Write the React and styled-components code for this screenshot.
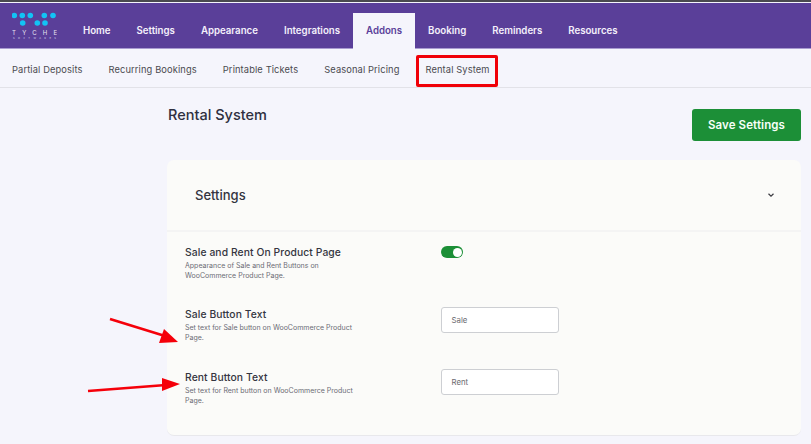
import React from 'react';
import styled, { createGlobalStyle } from 'styled-components';

const GlobalStyle = createGlobalStyle`
    html, body {
        margin: 0;
        padding: 0;
        background: #f5f5fc;
        font-family: Inter, "Liberation Sans", sans-serif;
    }
`;

const Page = styled.div`
    position: relative;
    width: 811px;
    height: 444px;
    overflow: hidden;
    background: #f5f5fc;
    border-top: 2px solid #4a4a4f;
    box-sizing: border-box;
`;

const TopBar = styled.div`
    height: 46px;
    margin-top: 1px;
    background: #5a3f99;
    border-bottom: 1px solid #a99bd0;
    box-sizing: border-box;
    display: flex;
    align-items: flex-end;
    padding-left: 12px;
`;

const LogoBox = styled.div`
    width: 45px;
    height: 31px;
    margin-bottom: 6px;
    margin-right: 13px;
    flex-shrink: 0;
`;

const NavItem = styled.div`
    height: ${(p) => (p.$active ? '36px' : '35px')};
    margin-bottom: ${(p) => (p.$active ? '-1px' : '0')};
    padding: 0 13px;
    display: flex;
    align-items: center;
    padding-bottom: ${(p) => (p.$active ? '1px' : '0')};
    box-sizing: border-box;
    font-size: 9.68px;
    font-weight: 600;
    color: ${(p) => (p.$active ? '#5a3f99' : '#f4f0fb')};
    background: ${(p) => (p.$active ? '#f5f5fc' : 'transparent')};
`;

const SubBar = styled.div`
    height: 39px;
    border-bottom: 1px solid #e2e2e8;
    box-sizing: border-box;
    display: flex;
    align-items: center;
    padding: 2px 0 0 12px;
    gap: 26px;
`;

const SubItem = styled.div`
    position: relative;
    font-size: 9.3px;
    letter-spacing: 0.12px;
    color: #4b4b50;
`;

const RedFrame = styled.div`
    position: absolute;
    left: -9px;
    right: -8px;
    top: -9px;
    bottom: -12px;
    border: 3px solid #f00008;
    border-radius: 2px;
`;

const Content = styled.div`
    width: 634px;
    margin-left: 167px;
`;

const TitleRow = styled.div`
    display: flex;
    justify-content: space-between;
    align-items: flex-start;
    padding-top: 21px;
`;

const Title = styled.div`
    font-size: 14.5px;
    font-weight: 500;
    line-height: 17px;
    color: #2f3040;
    margin: -3px 0 0 1px;
`;

const SaveButton = styled.div`
    width: 109px;
    height: 32px;
    background: #1c8f37;
    border-radius: 3px;
    color: #f6fff8;
    font-size: 11.5px;
    font-weight: 600;
    letter-spacing: 0.1px;
    display: flex;
    align-items: center;
    justify-content: center;
`;

const Card = styled.div`
    margin-top: 19px;
    height: 276px;
    background: #fbfbf9;
    border-radius: 7px;
    border-bottom: 1px solid #e8e8ec;
    box-sizing: border-box;
`;

const CardHeader = styled.div`
    height: 72px;
    border-bottom: 2px solid #f4f4f4;
    box-sizing: border-box;
    display: flex;
    align-items: center;
    justify-content: space-between;
    padding: 0 26px 0 28px;
`;

const CardTitle = styled.div`
    font-size: 13px;
    font-weight: 500;
    color: #33343f;
`;

const Row = styled.div`
    display: flex;
    height: ${(p) => p.$height}px;
    padding-left: 18px;
    padding-top: ${(p) => p.$top || 0}px;
`;

const RowText = styled.div`
    width: 256px;
`;

const RowTitle = styled.div`
    font-size: 10.3px;
    font-weight: 500;
    line-height: 13px;
    letter-spacing: 0.1px;
    color: #34353f;
`;

const RowHelp = styled.div`
    font-size: 7px;
    line-height: 10.5px;
    margin-top: 1.5px;
    color: #6b6c75;
    width: 185px;
`;

const Control = styled.div`
    margin-top: ${(p) => p.$top}px;
`;

const TextField = styled.div`
    width: 117.5px;
    height: 26px;
    box-sizing: border-box;
    background: #fff;
    border: 1px solid #cdcfd3;
    border-radius: 3px;
    display: flex;
    align-items: center;
    padding-left: 9.5px;
    font-size: 7.8px;
    color: #6a6a70;
`;

const Toggle = styled.div`
    width: 22px;
    height: 12px;
    border-radius: 6px;
    background: #1c8f37;
    display: flex;
    align-items: center;
    justify-content: flex-end;
    padding-right: 1px;
    box-sizing: border-box;
`;

const Knob = styled.div`
    width: 9px;
    height: 9px;
    border-radius: 50%;
    background: #fff;
`;

const ArrowLayer = styled.svg`
    position: absolute;
    left: 0;
    top: -2px;
    width: 811px;
    height: 444px;
    pointer-events: none;
`;

const navItems = ['Home', 'Settings', 'Appearance', 'Integrations', 'Addons', 'Booking', 'Reminders', 'Resources'];
const subItems = ['Partial Deposits', 'Recurring Bookings', 'Printable Tickets', 'Seasonal Pricing', 'Rental System'];

const dots = [
    [14.3, 16.5], [22.3, 16.5], [30.3, 16.5], [44.3, 16.5], [53, 16.5],
    [22.7, 24], [37.3, 24], [45, 24],
];

function Logo() {
    return (
        <LogoBox>
            <svg width="45" height="31" viewBox="12 12 45 31">
                {dots.map(([x, y]) => (
                    <circle key={`${x}-${y}`} cx={x} cy={y} r="2.8" fill="#12c3f5" />
                ))}
                <text x="12" y="36" fontSize="6" fill="#e8e4f2" textLength="45" fontFamily="Inter, sans-serif">
                    TYCHE
                </text>
                <text x="13" y="40" fontSize="2.6" fill="#d9d3ea" textLength="43" fontFamily="Inter, sans-serif">
                    SOFTWARES
                </text>
            </svg>
        </LogoBox>
    );
}

function App() {
    return (
        <Page>
            <GlobalStyle />
            <TopBar>
                <Logo />
                {navItems.map((item) => (
                    <NavItem key={item} $active={item === 'Addons'}>{item}</NavItem>
                ))}
            </TopBar>
            <SubBar>
                {subItems.map((item) => (
                    <SubItem key={item}>
                        {item}
                        {item === 'Rental System' && <RedFrame />}
                    </SubItem>
                ))}
            </SubBar>
            <Content>
                <TitleRow>
                    <Title>Rental System</Title>
                    <SaveButton>Save Settings</SaveButton>
                </TitleRow>
                <Card>
                    <CardHeader>
                        <CardTitle>Settings</CardTitle>
                        <svg width="8" height="6" viewBox="0 0 8 6">
                            <path d="M1.5 1.8 L4 4.2 L6.5 1.8" fill="none" stroke="#3a3a40" strokeWidth="1.2" />
                        </svg>
                    </CardHeader>
                    <Row $top={14} $height={62}>
                        <RowText>
                            <RowTitle>Sale and Rent On Product Page</RowTitle>
                            <RowHelp>Appearance of Sale and Rent Buttons on WooCommerce Product Page.</RowHelp>
                        </RowText>
                        <Control $top={0}>
                            <Toggle><Knob /></Toggle>
                        </Control>
                    </Row>
                    <Row $height={63}>
                        <RowText>
                            <RowTitle>Sale Button Text</RowTitle>
                            <RowHelp>Set text for Sale button on WooCommerce Product Page.</RowHelp>
                        </RowText>
                        <Control $top={-1}>
                            <TextField>Sale</TextField>
                        </Control>
                    </Row>
                    <Row $height={62}>
                        <RowText>
                            <RowTitle>Rent Button Text</RowTitle>
                            <RowHelp>Set text for Rent button on WooCommerce Product Page.</RowHelp>
                        </RowText>
                        <Control $top={-2}>
                            <TextField>Rent</TextField>
                        </Control>
                    </Row>
                </Card>
            </Content>
            <ArrowLayer viewBox="0 0 811 444">
                <path d="M110 319 L165 336" stroke="#f5000a" strokeWidth="2.6" />
                <polygon points="178,342 159,343 164,329" fill="#f5000a" />
                <path d="M88 391 L166 385" stroke="#f5000a" strokeWidth="2.6" />
                <polygon points="180,384 162,391 162,378" fill="#f5000a" />
            </ArrowLayer>
        </Page>
    );
}

export default App;
